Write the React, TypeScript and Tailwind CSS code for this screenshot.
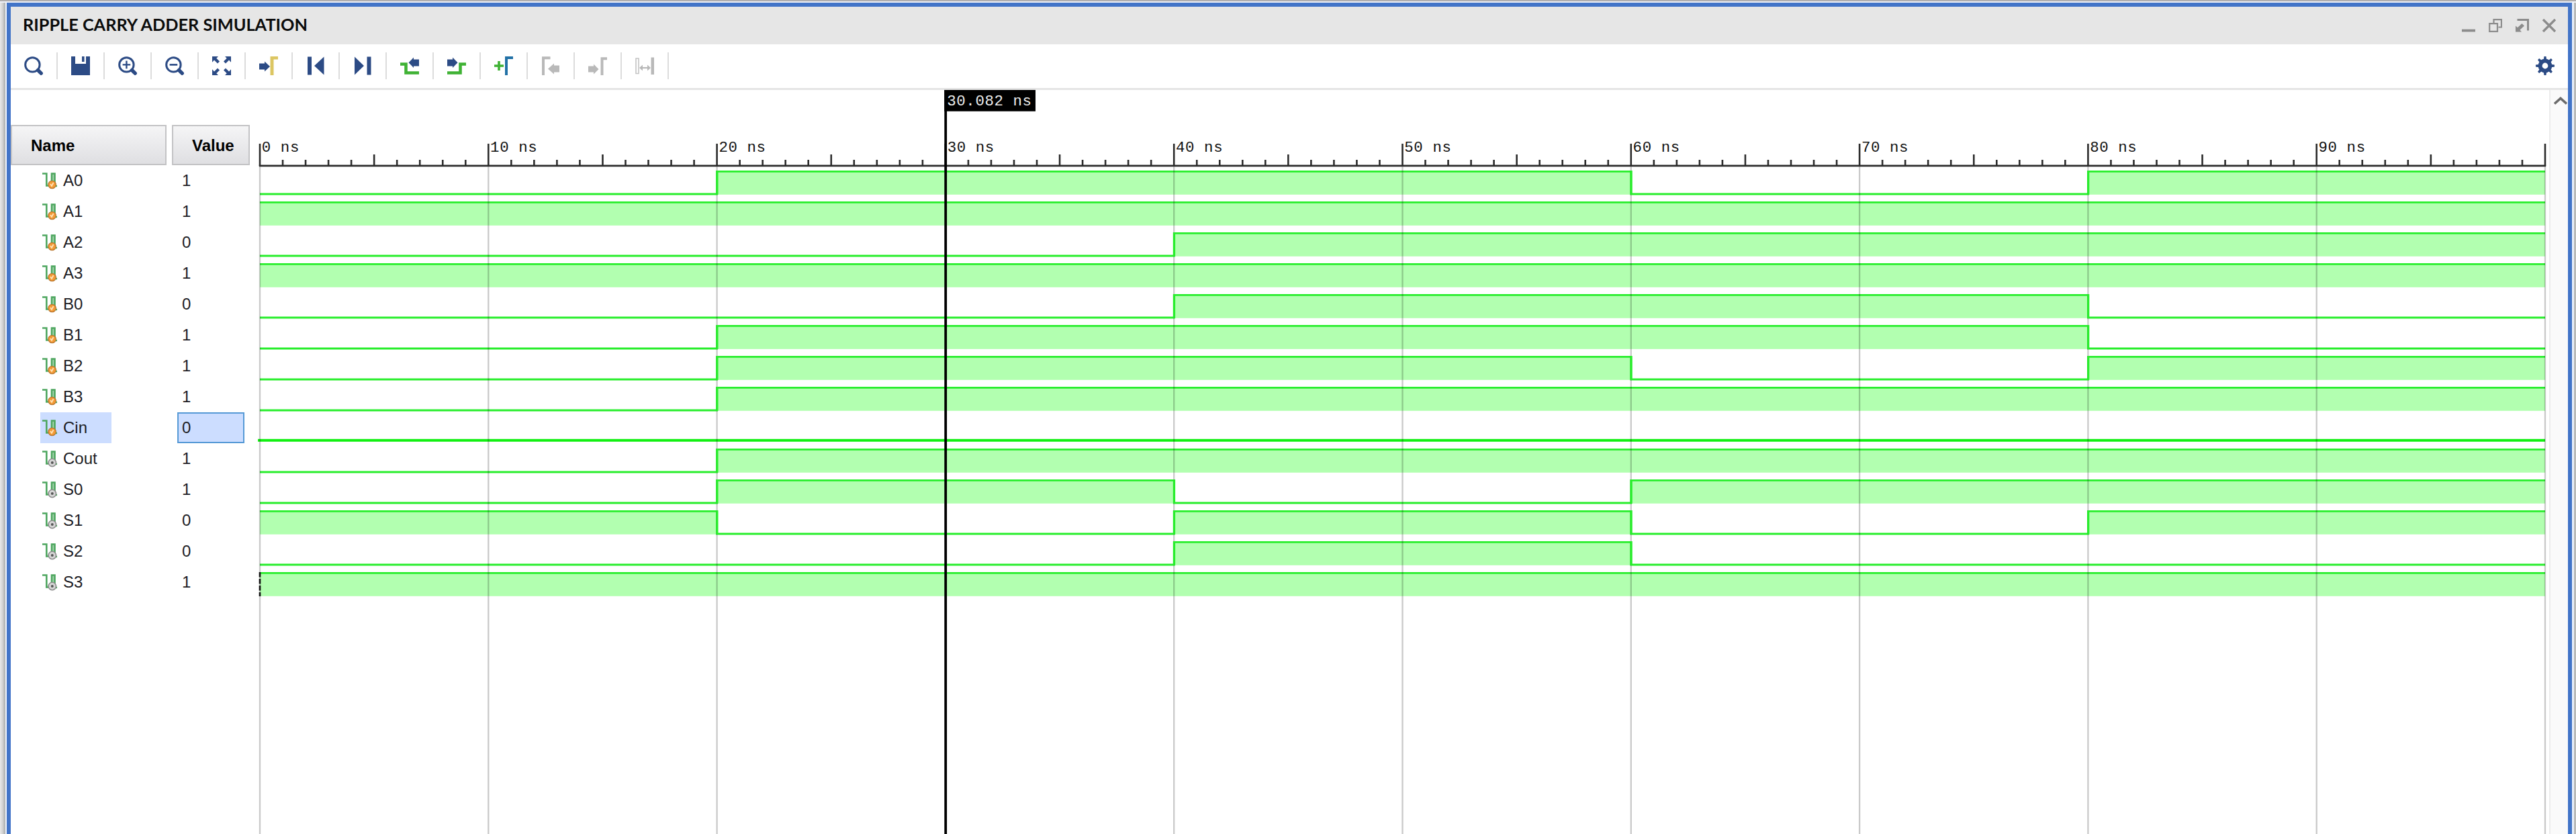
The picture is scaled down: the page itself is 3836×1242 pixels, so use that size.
import React from "react";

const NAVY = "#2c4b85";
const GREEN = "#3fb234";
const GRAY = "#b9b9b9";
const TRACE = "#28ee2c";

type Signal = { name: string; value: string; kind: "in" | "out"; start: 0 | 1; edges: number[]; selected?: boolean };

const signals: Signal[] = [
  { name: "A0", value: "1", kind: "in", start: 0, edges: [20, 60, 80] },
  { name: "A1", value: "1", kind: "in", start: 1, edges: [] },
  { name: "A2", value: "0", kind: "in", start: 0, edges: [40] },
  { name: "A3", value: "1", kind: "in", start: 1, edges: [] },
  { name: "B0", value: "0", kind: "in", start: 0, edges: [40, 80] },
  { name: "B1", value: "1", kind: "in", start: 0, edges: [20, 80] },
  { name: "B2", value: "1", kind: "in", start: 0, edges: [20, 60, 80] },
  { name: "B3", value: "1", kind: "in", start: 0, edges: [20] },
  { name: "Cin", value: "0", kind: "in", start: 0, edges: [], selected: true },
  { name: "Cout", value: "1", kind: "out", start: 0, edges: [20] },
  { name: "S0", value: "1", kind: "out", start: 0, edges: [20, 40, 60] },
  { name: "S1", value: "0", kind: "out", start: 1, edges: [20, 40, 60, 80] },
  { name: "S2", value: "0", kind: "out", start: 0, edges: [40, 60] },
  { name: "S3", value: "1", kind: "out", start: 1, edges: [] },
];

const Icon = ({ children }: { children: React.ReactNode }) => (
  <svg className="h-7 w-7 shrink-0" viewBox="0 0 28 28" fill="none">
    {children}
  </svg>
);

const Lens = ({ children }: { children?: React.ReactNode }) => (
  <Icon>
    <circle cx="12.4" cy="12.4" r="10.7" stroke={NAVY} strokeWidth="3" />
    <path d="M20.5 20.5L25.2 25.2" stroke={NAVY} strokeWidth="5.4" strokeLinecap="round" />
    {children}
  </Icon>
);

const tools: React.ReactNode[] = [
  <Lens />,
  <Icon>
    <path d="M0 0H6V11H22V0H28V28H0Z" fill={NAVY} />
    <path d="M16 0H19.6V8H16Z" fill={NAVY} />
  </Icon>,
  <Lens>
    <path d="M12.4 6.6V18.2M6.6 12.4H18.2" stroke={NAVY} strokeWidth="2.4" />
  </Lens>,
  <Lens>
    <path d="M6.6 12.4H18.2" stroke={NAVY} strokeWidth="2.6" />
  </Lens>,
  <Icon>
    <path d="M0 0H9L6.3 2.7L11 7.4L8 10.5L3 5.6L0 8.8ZM28 0H19L21.7 2.7L17 7.4L20 10.5L25 5.6L28 8.8ZM0 28H9L6.3 25.3L11 20.6L8 17.5L3 22.4L0 19.2ZM28 28H19L21.7 25.3L17 20.6L20 17.5L25 22.4L28 19.2Z" fill={NAVY} />
  </Icon>,
  <Icon>
    <path d="M0 10.5H8V7.5L16 15L8 22.5V19.5H0Z" fill={NAVY} />
    <path d="M16.5 0H28V4.5H21.5V28H16.5Z" fill="#dcc662" />
  </Icon>,
  <Icon>
    <path d="M2 0.5H8V27.5H2ZM26.5 0.5V27.5L12 14Z" fill={NAVY} />
  </Icon>,
  <Icon>
    <path d="M26.5 0.5H20.5V27.5H26.5ZM2 0.5V27.5L16 14Z" fill={NAVY} />
  </Icon>,
  <Icon>
    <path d="M28 4.5H20V1.5L12.5 9.2L20 17V14.5H28Z" fill={NAVY} />
    <path d="M0 11.5H8.5V24.5H28" stroke={GREEN} strokeWidth="4.6" />
  </Icon>,
  <Icon>
    <path d="M0 4.5H8V1.5L15.5 9.2L8 17V14.5H0Z" fill={NAVY} />
    <path d="M28 11.5H19.5V24.5H0" stroke={GREEN} strokeWidth="4.6" />
  </Icon>,
  <Icon>
    <path d="M0 14H14M7 7V21" stroke={GREEN} strokeWidth="3.6" />
    <path d="M18 28V2H28" stroke="#2271a6" strokeWidth="4" />
  </Icon>,
  <Icon>
    <path d="M3 28V2.2H13.5" stroke={GRAY} strokeWidth="4" />
    <path d="M27 13.5H19V10.5L10 18.5L19 26.5V23.5H27Z" fill={GRAY} />
  </Icon>,
  <Icon>
    <path d="M20.5 28V3.2H28" stroke={GRAY} strokeWidth="4" />
    <path d="M0 14.500H8V11.5L15.5 19L8 26.5V23.5H0Z" fill={GRAY} />
  </Icon>,
  <Icon>
    <path d="M1 3H5V25.5H1Z" stroke="#c4c4c4" strokeWidth="1.6" />
    <path d="M23.5 1.5H28V27H23.5Z" fill={GRAY} />
    <path d="M8 17H21" stroke={GRAY} strokeWidth="2.2" />
    <path d="M6 17L11 12.5V21.5ZM23 17L18 12.5V21.5Z" fill={GRAY} />
  </Icon>,
];

const Gear = () => (
  <Icon>
    <circle cx="14" cy="14" r="7.4" stroke={NAVY} strokeWidth="6" />
    {[0, 45, 90, 135].map((a) => (
      <path key={a} d="M11.8 5L12.5 0H15.5L16.2 5ZM11.8 23L12.5 28H15.5L16.2 23Z" fill={NAVY} transform={`rotate(${a} 14 14)`} />
    ))}
  </Icon>
);

const SignalIcon = ({ kind }: { kind: "in" | "out" }) => (
  <svg className="h-[25px] w-[23px] shrink-0" viewBox="0 0 23 25" fill="none">
    <path d="M0 1.5H6.3V19.5H13" stroke="#4da65f" strokeWidth="2.6" />
    <path d="M14 20V1.5H18.5V20H22" stroke="#4da65f" strokeWidth="2.6" fill="#a9d8b1" />
    {kind === "in" ? (
      <>
        <circle cx="14.6" cy="18" r="5.7" fill="#f39a35" stroke="#b9772f" strokeWidth="1.2" />
        <path d="M12 17L14 20L16.6 15" stroke="#ffe3b8" strokeWidth="1.8" />
      </>
    ) : (
      <>
        <circle cx="14.8" cy="18" r="5.7" fill="#d6d6d6" stroke="#8b8b8b" strokeWidth="1.6" />
        <circle cx="14.8" cy="18" r="2" fill="#555" />
      </>
    )}
  </svg>
);

/* Chart geometry, in the SVG's own pixels. */
const X0 = 11;
const PX_PER_NS = 34.03;
const ROW0 = 112;
const tx = (t: number) => X0 + t * PX_PER_NS;

const Wave = ({ signal, index }: { signal: Signal; index: number }) => {
  const top = ROW0 + index * 46;
  const hi = top + 9.3;
  const lo = top + 43;
  const pts = [0, ...signal.edges, 100];
  let level = signal.start;
  let d = "";
  const fills: React.ReactNode[] = [];
  for (let i = 0; i < pts.length - 1; i++) {
    const a = tx(pts[i]);
    const b = tx(pts[i + 1]);
    const y = level ? hi : lo;
    d += `${i ? "L" : "M"}${a} ${y}L${b} ${y}`;
    if (level) fills.push(<rect key={i} x={a} y={hi} width={b - a} height={34.5} fill="#b2ffb0" />);
    level = level ? 0 : 1;
  }
  return (
    <g>
      {fills}
      {signal.selected ? (
        <path d={`M8 ${lo - 1.3}H${tx(100)}`} stroke="#12f012" strokeWidth="4" fill="none" />
      ) : (
        <path d={d} stroke={TRACE} strokeWidth="2.8" fill="none" />
      )}
    </g>
  );
};

const Chart = () => (
  <svg className="h-[1108px] w-[3420px] shrink-0" viewBox="0 0 3420 1108">
    {signals.map((s, i) => (
      <Wave key={s.name} signal={s} index={i} />
    ))}
    {Array.from({ length: 11 }, (_, i) => (
      <path key={i} d={`M${tx(i * 10)} 114V1108`} stroke="#000" strokeOpacity="0.21" strokeWidth="2.3" />
    ))}
    {signals.map((s, r) =>
      s.edges.map((e) => (
        <path key={s.name + e} d={`M${tx(e) + 0.4} ${ROW0 + r * 46 + 8}v36`} stroke={TRACE} strokeWidth="3" />
      ))
    )}
    <path d={`M${tx(0)} ${ROW0 + 13 * 46 + 8}v36`} stroke="#111" strokeWidth="2.6" strokeDasharray="7.5 2.5" />
    <path d={`M${tx(0) - 1.2} 112.9H${tx(100) + 1.2}`} stroke="#2b2b2b" strokeWidth="2.6" />
    {Array.from({ length: 101 }, (_, i) => (
      <path key={i} d={`M${tx(i)} ${i % 10 === 0 ? 80 : i % 5 === 0 ? 96 : 104}V113`} stroke="#2b2b2b" strokeWidth="2.6" />
    ))}
    {Array.from({ length: 10 }, (_, i) => (
      <text key={i} x={tx(i * 10) + 2.8} y="92.3" fontFamily="'Liberation Mono', monospace" fontSize="22.4" letterSpacing="0.6" fill="#111">
        {`${i * 10} ns`}
      </text>
    ))}
    <path d="M1032.2 0V1108" stroke="#000" strokeWidth="3.8" />
    <path d="M1030.3 0H1166V31.7H1030.3Z" fill="#000" />
    <text x="1034.3" y="22.5" fontFamily="'Liberation Mono', monospace" fontSize="22.4" letterSpacing="0.6" fill="#eee">
      30.082 ns
    </text>
  </svg>
);

const HeaderCell = ({ className, children }: { className: string; children: React.ReactNode }) => (
  <div className={`flex h-[60px] items-center border-2 border-[#c3c3c5] bg-linear-to-b from-[#f5f5f6] to-[#dfdfe2] pt-0.5 text-2xl font-bold text-black ${className}`}>
    {children}
  </div>
);

export default function App() {
  return (
    <div className="flex h-[1242px] w-[3836px] flex-col overflow-hidden bg-[#f1f3f8] font-['Liberation_Sans',sans-serif]">
      <div className="h-1 shrink-0 border-t-2 border-[#b0aeae] bg-[#eef1f8]" />
      <div className="flex flex-1">
        <div className="w-2 shrink-0 bg-linear-to-r from-[#e9e9e9] via-[#d2d2d2] to-[#a9acac]" />
        <div className="w-0.5 shrink-0 bg-[#f4f8ff]" />
        <div className="flex w-[3820px] flex-col border-x-6 border-t-6 border-[#4274c8] bg-white">
          <header className="flex h-[56px] shrink-0 items-center justify-between bg-[#e6e6e6] pr-[18px] pl-[18px]">
            <svg className="h-[40px] w-[440px]" viewBox="0 0 440 40">
              <text x="0" y="28" textLength="424" lengthAdjust="spacingAndGlyphs" fontFamily="Lato, sans-serif" fontWeight="700" fontSize="24.6" fill="#0b0b0b">
                RIPPLE CARRY ADDER SIMULATION
              </text>
            </svg>
            <div className="flex gap-5">
              <svg className="h-5 w-5" viewBox="0 0 20 20">
                <path d="M0 17.5H20" stroke="#8c8c8c" strokeWidth="3.8" />
              </svg>
              <svg className="h-5 w-5" viewBox="0 0 20 20" fill="none" stroke="#8c8c8c" strokeWidth="2.2">
                <path d="M7.5 6V1.2H19V12.5H14.5" />
                <path d="M1.2 7.2H13V18.8H1.2Z" />
              </svg>
              <svg className="h-5 w-5" viewBox="0 0 20 20" fill="none">
                <path d="M2.5 1.5H18.5V17.5" stroke="#8c8c8c" strokeWidth="3" />
                <path d="M0 10.5L3 13L9.5 7L13 10.5L6.5 16.5L9 19.5H0Z" fill="#8c8c8c" />
              </svg>
              <svg className="h-5 w-5" viewBox="0 0 20 20">
                <path d="M1 1L19 19M19 1L1 19" stroke="#8c8c8c" strokeWidth="3.4" />
              </svg>
            </div>
          </header>
          <div className="flex h-[68px] shrink-0 items-center justify-between border-b-3 border-[#e5e5e5] pr-5 pb-[1px] pl-5">
            <div className="flex items-center gap-5">
              {tools.map((t, i) => (
                <React.Fragment key={i}>
                  {t}
                  <div className="h-10 w-0.5 bg-[#dcdcdc]" />
                </React.Fragment>
              ))}
            </div>
            <Gear />
          </div>
          <main className="flex h-[1108px]">
            <section className="w-[360px] shrink-0">
              <div className="flex gap-2 pt-[52px]">
                <HeaderCell className="w-[232px] pl-7">Name</HeaderCell>
                <HeaderCell className="w-[116px] pl-7">Value</HeaderCell>
              </div>
              <div className="flex flex-col">
                {signals.map((s) => (
                  <div key={s.name} className="flex h-[46px] text-2xl text-[#1c1c24]">
                    <div className={`ml-11 flex h-[46px] w-[106px] items-center gap-2 pl-[3px] ${s.selected ? "bg-[#ccddff]" : ""}`}>
                      <SignalIcon kind={s.kind} />
                      <span>{s.name}</span>
                    </div>
                    <div className={`ml-[98px] flex h-[46px] w-[100px] items-center border-2 pl-[5px] ${s.selected ? "border-[#5599d6] bg-[#ccddff]" : "border-transparent"}`}>
                      {s.value}
                    </div>
                  </div>
                ))}
              </div>
            </section>
            <Chart />
            <aside className="flex flex-1 justify-center border-l-2 border-[#ececec] bg-[#fafafa] pt-2.5 pl-1">
              <svg className="h-3 w-5" viewBox="0 0 20 12">
                <path d="M1 10.5L10 2.5L19 10.5" fill="none" stroke="#6b6b6b" strokeWidth="3.6" />
              </svg>
            </aside>
          </main>
        </div>
        <div className="w-[3px] shrink-0 bg-[#eaf0fb]" />
        <div className="flex-1 bg-[#b9bab8]" />
      </div>
    </div>
  );
}
